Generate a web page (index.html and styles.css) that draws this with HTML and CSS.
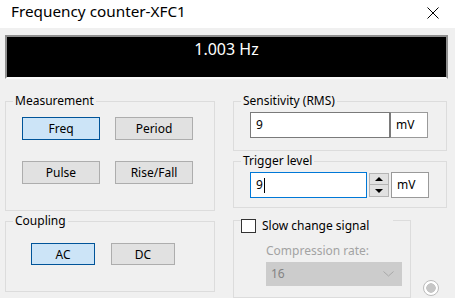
FILE: index.html
```
<!DOCTYPE html>
<html lang="en">
<head>
    <meta charset="UTF-8">
    <meta name="viewport" content="width=device-width, initial-scale=1.0">
    <title>Frequency counter-XFC1</title>
    <link rel="stylesheet" href="styles.css">
</head>
<body>
    <div class="titlebar">
        <span class="title">Frequency counter-XFC1</span>
        <svg class="close" width="12" height="12" viewBox="0 0 12 12">
            <path d="M0.5 0.5 L11.5 11.5 M11.5 0.5 L0.5 11.5" stroke="#000" stroke-width="1"/>
        </svg>
    </div>

    <div class="display">1.003 Hz</div>

    <div class="panels">
        <div class="col col-left">
            <fieldset class="group measure">
                <legend>Measurement</legend>
                <div class="btn-grid">
                    <button class="btn active">Freq</button>
                    <button class="btn">Period</button>
                    <button class="btn">Pulse</button>
                    <button class="btn">Rise/Fall</button>
                </div>
            </fieldset>
            <fieldset class="group coupling">
                <legend>Coupling</legend>
                <div class="btn-row">
                    <button class="btn small active">AC</button>
                    <button class="btn small">DC</button>
                </div>
            </fieldset>
        </div>

        <div class="col col-right">
            <fieldset class="group sens">
                <legend>Sensitivity (RMS)</legend>
                <div class="field">
                    <div class="input wide">9</div>
                    <div class="unit joined">mV</div>
                </div>
            </fieldset>
            <fieldset class="group trig">
                <legend>Trigger level</legend>
                <div class="field">
                    <div class="input focus">9<span class="caret"></span></div>
                    <div class="spinner">
                        <span class="spin up"></span>
                        <span class="spin down"></span>
                    </div>
                    <div class="unit">mV</div>
                </div>
            </fieldset>
            <div class="slow-row">
                <fieldset class="group slow">
                    <legend class="check-legend">
                        <span class="checkbox"></span>
                        <span>Slow change signal</span>
                    </legend>
                    <div class="slow-body">
                        <div class="hint">Compression rate:</div>
                        <div class="select">
                            <span>16</span>
                            <svg width="11" height="6" viewBox="0 0 11 6">
                                <path d="M0.5 0.5 L5.5 5 L10.5 0.5" fill="none" stroke="#a8a8a8" stroke-width="1"/>
                            </svg>
                        </div>
                    </div>
                </fieldset>
                <span class="radio"></span>
            </div>
        </div>
    </div>
</body>
</html>
```

FILE: styles.css
```
* {
    box-sizing: border-box;
}
body {
    margin: 0;
    background-color: #f0f0f0;
    font-family: "Noto Sans", "Open Sans", sans-serif;
    font-size: 12px;
    line-height: 14px;
    color: #000;
    overflow: hidden;
}
.titlebar {
    height: 28px;
    background: #fff;
    display: flex;
    justify-content: space-between;
    align-items: flex-start;
    padding: 0 16px 0 11px;
}
.title {
    font-size: 15.3px;
    line-height: 20px;
    padding-top: 1px;
}
.close {
    margin-top: 7px;
}
.display {
    margin: 7px 7px 0 5px;
    height: 44px;
    background: #000;
    border: 2px solid #8f8f8f;
    border-bottom-color: #fafafa;
    color: #fff;
    font-size: 16px;
    line-height: 20px;
    text-align: center;
    padding-top: 2px;
}
.panels {
    display: flex;
    gap: 18px;
    padding-left: 5px;
    margin-top: 15px;
}
.col {
    display: flex;
    flex-direction: column;
}
.col-left {
    width: 210px;
    gap: 3px;
}
.col-right {
    width: 214px;
}
.group {
    margin: 0;
    padding: 0;
    border: 1px solid #dcdcdc;
    min-inline-size: 0;
}
.group legend {
    margin-left: 7px;
    padding: 0 2px;
    line-height: 14px;
}
.measure {
    height: 117px;
    padding-top: 9px;
}
.btn-grid {
    display: grid;
    grid-template-columns: 78px 78px;
    column-gap: 15px;
    row-gap: 21px;
    margin-left: 16px;
}
.btn {
    height: 23px;
    margin: 0;
    padding: 0;
    font-family: inherit;
    font-size: 12px;
    color: #000;
    background: #e1e1e1;
    border: 1px solid #adadad;
}
.btn.active {
    background: #cce4f7;
    border-color: #005499;
}
.coupling {
    height: 78px;
    padding-top: 15px;
}
.btn-row {
    display: flex;
    gap: 16px;
    margin-left: 25px;
}
.btn.small {
    width: 64px;
    height: 22px;
}
.sens {
    height: 57px;
    padding-top: 4px;
}
.trig {
    height: 54px;
    margin-top: 3px;
    padding-top: 4px;
}
.field {
    display: flex;
    align-items: flex-start;
    margin-left: 16px;
}
.input {
    width: 117px;
    height: 26px;
    background: #fff;
    border: 1px solid #7a7a7a;
    padding-left: 5px;
    line-height: 24px;
}
.input.wide {
    width: 140px;
}
.input.focus {
    border-color: #0078d7;
}
.caret {
    display: inline-block;
    width: 1px;
    height: 15px;
    background: #000;
    vertical-align: middle;
    margin-left: 1px;
}
.unit {
    width: 38px;
    height: 26px;
    background: #fff;
    border: 1px solid #9a9a9a;
    padding-left: 5px;
    line-height: 24px;
    margin-left: 2px;
}
.unit.joined {
    margin-left: 0;
    border-left-color: #7a7a7a;
}
.spinner {
    width: 20px;
    margin: 1px 0 0 2px;
    display: flex;
    flex-direction: column;
}
.spin {
    height: 12px;
    background: #e1e1e1;
    border: 1px solid #b4b4b4;
    display: flex;
    align-items: center;
    justify-content: center;
}
.spin + .spin {
    border-top: none;
}
.spin::after {
    content: "";
    border-left: 4px solid transparent;
    border-right: 4px solid transparent;
}
.spin.up::after {
    border-bottom: 4px solid #000;
}
.spin.down::after {
    border-top: 4px solid #000;
}
.slow-row {
    display: flex;
    align-items: flex-end;
    gap: 12px;
    margin-top: 11px;
}
.slow {
    width: 178px;
    height: 79px;
    padding-top: 23px;
}
.group .check-legend {
    width: 152px;
    height: 2px;
    padding: 0;
    display: flex;
    align-items: flex-start;
    gap: 6px;
    overflow: visible;
}
.checkbox {
    flex: none;
    width: 15px;
    height: 14px;
    background: #fff;
    border: 1px solid #333;
}
.slow-body {
    margin-left: 32px;
}
.hint {
    color: #a3a3a3;
}
.select {
    width: 136px;
    height: 24px;
    margin-top: 4px;
    background: #cccccc;
    color: #838383;
    display: flex;
    align-items: center;
    justify-content: space-between;
    padding: 0 8px 0 5px;
}
.radio {
    width: 16px;
    height: 16px;
    border-radius: 50%;
    border: 1px solid #bcbcbc;
    background: radial-gradient(circle, #c6c6c6 0 4.5px, #fff 5px);
    margin-bottom: 2px;
}
```
